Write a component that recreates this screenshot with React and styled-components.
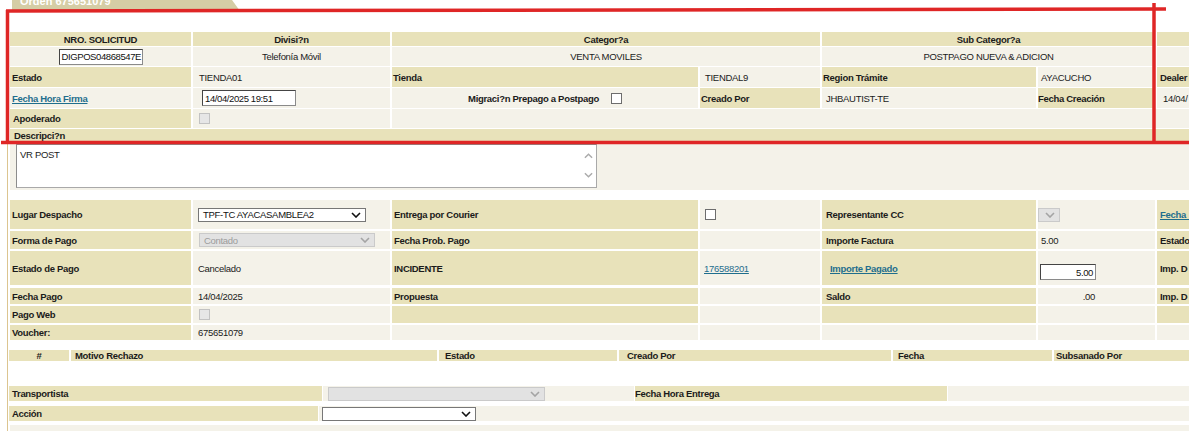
import styled, { createGlobalStyle } from "styled-components";

const KHAKI = "#e8e2ba";
const LIGHT = "#f4f2e9";
const LINK = "#1f6e8d";

const GlobalStyle = createGlobalStyle`
  html, body {
    margin: 0;
    padding: 0;
    background: #fff;
    overflow: hidden;
  }
  body {
    font-family: "Liberation Sans", Arial, sans-serif;
    font-size: 9.5px;
    letter-spacing: -0.3px;
    color: #1b1b1b;
  }
`;

const Page = styled.div`
  position: relative;
  width: 1300px;
  padding-left: 7px;
`;

const TabStrip = styled.div`
  height: 11px;
  overflow: hidden;
  padding-left: 5px;
`;

const Tab = styled.div`
  width: 228px;
  height: 11px;
  background: #d5cda5;
  clip-path: polygon(0 0, 220px 0, 228px 100%, 0 100%);
  color: #fff;
  font-weight: bold;
  font-size: 11px;
  letter-spacing: 0;
  padding-left: 8px;
  box-sizing: border-box;
  overflow: hidden;
`;

const TabLabel = styled.div`
  margin-top: -6px;
  line-height: 14px;
`;

const Panel = styled.div`
  border-left: 1px solid #dcc590;
  padding-left: 2px;
`;

const Spacer = styled.div`
  height: ${(p) => p.$h}px;
  background: ${(p) => (p.$light ? LIGHT : "transparent")};
`;

const Grid = styled.div`
  display: grid;
  grid-template-columns: ${(p) => p.$cols};
  grid-template-rows: ${(p) => p.$rows};
  column-gap: ${(p) => p.$cg ?? 2}px;
  row-gap: ${(p) => p.$rg ?? 1}px;
  margin-left: ${(p) => p.$ml ?? 0}px;
`;

const Cell = styled.div`
  display: flex;
  align-items: ${(p) => p.$valign || "center"};
  justify-content: ${(p) =>
    p.$align === "center" ? "center" : p.$align === "right" ? "flex-end" : "flex-start"};
  grid-column: ${(p) => (p.$span ? `span ${p.$span}` : "auto")};
  padding: 0 ${(p) => p.$pr ?? 2}px ${(p) => p.$pb ?? 0}px ${(p) => p.$pl ?? 2}px;
  gap: ${(p) => p.$gap ?? 0}px;
  white-space: nowrap;
  overflow: hidden;
  min-width: 0;
`;

const Lbl = styled(Cell)`
  background: ${KHAKI};
  font-weight: bold;
`;

const Val = styled(Cell)`
  background: ${LIGHT};
  font-weight: ${(p) => (p.$bold ? "bold" : "normal")};
`;

const Link = styled.a`
  color: ${LINK};
  text-decoration: underline;
  cursor: pointer;
`;

const TextBox = styled.div`
  width: ${(p) => p.$w}px;
  height: ${(p) => p.$h ?? 16}px;
  box-sizing: border-box;
  border: 1px solid #444;
  border-right-color: #8a8a8a;
  border-bottom-color: #8a8a8a;
  background: #fff;
  padding: 0 2px;
  letter-spacing: -0.4px;
  display: flex;
  align-items: center;
  justify-content: ${(p) => (p.$right ? "flex-end" : "flex-start")};
  font-weight: normal;
  color: #111;
`;

const SelectBox = styled.div`
  width: ${(p) => p.$w}px;
  height: 14px;
  box-sizing: border-box;
  border: 1px solid ${(p) => (p.$off ? "#cacaca" : "#777")};
  background: ${(p) => (p.$off ? "#e2e2e2" : "#fff")};
  color: ${(p) => (p.$off ? "#9c9c9c" : "#111")};
  display: flex;
  align-items: center;
  justify-content: space-between;
  padding: 0 4px;
  font-weight: normal;
`;

const Check = styled.span`
  display: inline-block;
  flex: none;
  width: 11px;
  height: 11px;
  box-sizing: border-box;
  border: 1px solid ${(p) => (p.$off ? "#c2c2c2" : "#6d6d6d")};
  background: ${(p) => (p.$off ? "#e6e6e6" : "#fff")};
`;

const DescBand = styled.div`
  background: ${LIGHT};
  height: 48px;
  box-sizing: border-box;
  padding: 2px 0 0 6px;
`;

const FakeArea = styled.div`
  width: 581px;
  height: 44px;
  box-sizing: border-box;
  border: 1px solid #a9a9a9;
  border-top-color: #8c8c8c;
  border-left-color: #8c8c8c;
  background: #fff;
  display: flex;
`;

const AreaText = styled.div`
  flex: 1;
  padding: 4px 0 0 3px;
`;

const AreaScroll = styled.div`
  width: 16px;
  display: flex;
  flex-direction: column;
  justify-content: space-between;
  align-items: center;
  padding: 8px 0 9px;
`;

const Markup = styled.svg`
  position: absolute;
  left: 0;
  top: 0;
  pointer-events: none;
`;

const Chevron = ({ color = "#111", up = false, w = 10 }) => (
  <svg width={w} height="6" viewBox="0 0 10 6">
    <polyline
      points={up ? "1,5 5,1 9,5" : "1,1 5,5 9,1"}
      fill="none"
      stroke={color}
      strokeWidth="1.6"
    />
  </svg>
);

const Select = ({ w, off, children }) => (
  <SelectBox $w={w} $off={off}>
    <span>{children}</span>
    <Chevron color={off ? "#a4a4a4" : "#111"} />
  </SelectBox>
);

const COLS = "181px 197px 306px 120px 214px 117px 140px";

export default function App() {
  return (
    <>
      <GlobalStyle />
      <Page>
        <TabStrip>
          <Tab>
            <TabLabel>Orden 675651079</TabLabel>
          </Tab>
        </TabStrip>
        <Panel>
          <Spacer $h={21} />

          <Grid $cols={COLS} $rows="14px 19px 20px 20px 19px 13px">
            <Lbl $align="center">NRO. SOLICITUD</Lbl>
            <Lbl $align="center">Divisi?n</Lbl>
            <Lbl $align="center" $span={2}>Categor?a</Lbl>
            <Lbl $align="center" $span={2}>Sub Categor?a</Lbl>
            <Lbl />

            <Val $align="center">
              <TextBox $w={84}>DIGPOS04868547E</TextBox>
            </Val>
            <Val $align="center">Telefonía Móvil</Val>
            <Val $align="center" $span={2}>VENTA MOVILES</Val>
            <Val $align="center" $span={2}>POSTPAGO NUEVA &amp; ADICION</Val>
            <Val />

            <Lbl>Estado</Lbl>
            <Val $pl={6}>TIENDA01</Val>
            <Lbl $pl={1}>Tienda</Lbl>
            <Val $pl={5}>TIENDAL9</Val>
            <Lbl $pl={1}>Region Trámite</Lbl>
            <Val $pl={3}>AYACUCHO</Val>
            <Lbl $pl={3}>Dealer</Lbl>

            <Val $bold>
              <Link>Fecha Hora Firma</Link>
            </Val>
            <Val $pl={9}>
              <TextBox $w={94}>14/04/2025 19:51</TextBox>
            </Val>
            <Val $bold $align="center" $gap={12}>
              Migraci?n Prepago a Postpago <Check />
            </Val>
            <Lbl $pl={1}>Creado Por</Lbl>
            <Val $pl={4}>JHBAUTIST-TE</Val>
            <Lbl $pl={0}>Fecha Creación</Lbl>
            <Val $pl={6}>14/04/</Val>

            <Lbl $pl={3}>Apoderado</Lbl>
            <Val $pl={6}>
              <Check $off />
            </Val>
            <Val $span={5} />

            <Lbl $span={7} $pl={4}>Descripci?n</Lbl>
          </Grid>

          <DescBand>
            <FakeArea>
              <AreaText>VR POST</AreaText>
              <AreaScroll>
                <Chevron up color="#ababab" w={9} />
                <Chevron color="#ababab" w={9} />
              </AreaScroll>
            </FakeArea>
          </DescBand>
          <Spacer $h={10} />

          <Grid $cols={COLS} $rows="29px 18px 34px" $rg={2}>
            <Lbl>Lugar Despacho</Lbl>
            <Val $pl={5}>
              <Select w={168}>TPF-TC AYACASAMBLEA2</Select>
            </Val>
            <Lbl>Entrega por Courier</Lbl>
            <Val $pl={5}>
              <Check />
            </Val>
            <Lbl $pl={4}>Representante CC</Lbl>
            <Val $pl={0}>
              <Select w={22} off />
            </Val>
            <Lbl $pl={3}>
              <Link>Fecha&nbsp;&nbsp;&nbsp;</Link>
            </Lbl>

            <Lbl>Forma de Pago</Lbl>
            <Val $pl={6}>
              <Select w={176} off>Contado</Select>
            </Val>
            <Lbl>Fecha Prob. Pago</Lbl>
            <Val />
            <Lbl $pl={4}>Importe Factura</Lbl>
            <Val $pl={3}>5.00</Val>
            <Lbl $pl={3}>Estado</Lbl>

            <Lbl>Estado de Pago</Lbl>
            <Val $pl={5}>Cancelado</Val>
            <Lbl>INCIDENTE</Lbl>
            <Val $pl={4}>
              <Link>176588201</Link>
            </Val>
            <Lbl $pl={8}>
              <Link>Importe Pagado</Link>
            </Lbl>
            <Val $pl={2} $valign="flex-end" $pb={5}>
              <TextBox $w={56} $right>5.00</TextBox>
            </Val>
            <Lbl $pl={3}>Imp. D</Lbl>
          </Grid>
          <Spacer $h={3} />
          <Grid $cols={COLS} $rows="16px 17px 15px" $rg={2}>
            <Lbl>Fecha Pago</Lbl>
            <Val $pl={5}>14/04/2025</Val>
            <Lbl>Propuesta</Lbl>
            <Val />
            <Lbl $pl={4}>Saldo</Lbl>
            <Val $align="right" $pr={60}>.00</Val>
            <Lbl $pl={3}>Imp. D</Lbl>

            <Lbl>Pago Web</Lbl>
            <Val $pl={6}>
              <Check $off />
            </Val>
            <Lbl />
            <Val />
            <Lbl />
            <Val />
            <Lbl />

            <Lbl>Voucher:</Lbl>
            <Val $pl={5}>675651079</Val>
            <Val />
            <Val />
            <Val />
            <Val />
            <Val />
          </Grid>

          <Spacer $h={10} />
          <Grid $cols="60px 366px 178px 272px 159px 160px" $rows="11px" $ml={-1}>
            <Lbl $align="center">#</Lbl>
            <Lbl $pl={4}>Motivo Rechazo</Lbl>
            <Lbl $pl={6}>Estado</Lbl>
            <Lbl $pl={8}>Creado Por</Lbl>
            <Lbl $pl={5}>Fecha</Lbl>
            <Lbl $pl={2}>Subsanado Por</Lbl>
          </Grid>
          <Spacer $h={25} />

          <Grid $cols="313px 311px 312px 1fr" $rows="15px" $cg={1} $ml={-1}>
            <Lbl $pl={3}>Transportista</Lbl>
            <Val $pl={5}>
              <Select w={217} off />
            </Val>
            <Lbl $pl={0}>Fecha Hora Entrega</Lbl>
            <Val />
          </Grid>
          <Spacer $h={5} />
          <Grid $cols="309px 1fr" $rows="15px" $cg={1} $ml={-1}>
            <Lbl $pl={3}>Acción</Lbl>
            <Val $pl={3}>
              <Select w={154} />
            </Val>
          </Grid>
          <Spacer $h={4} />
          <Spacer $h={20} $light />
        </Panel>

        <Markup width="1189" height="150">
          <g stroke="#df2626" strokeWidth="3.5" fill="none">
            <line x1="6" y1="11" x2="1166" y2="9" />
            <line x1="1154" y1="3" x2="1154" y2="143" />
            <line x1="7.5" y1="10" x2="7.5" y2="143" />
            <line x1="1" y1="142.5" x2="1189" y2="142.5" />
          </g>
        </Markup>
      </Page>
    </>
  );
}
